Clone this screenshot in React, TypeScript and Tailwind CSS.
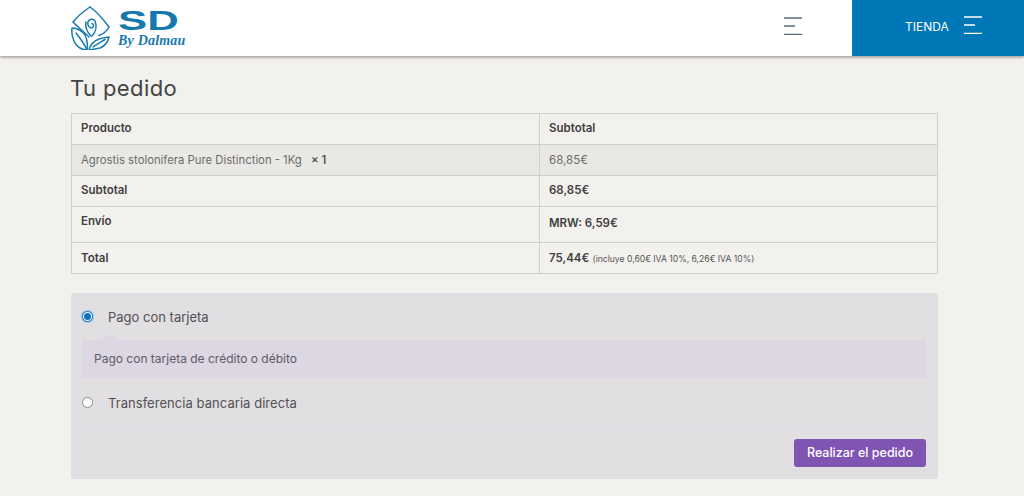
import React from 'react';

const Burger: React.FC<{ color: string; className?: string }> = ({ color, className }) => (
  <svg className={className} width="18" height="18" viewBox="0 0 18 18" fill="none" stroke={color} strokeWidth="1.5">
    <path d="M0 1H18" />
    <path d="M0 9H11" />
    <path d="M0 17.5H18" />
  </svg>
);

const Logo: React.FC = () => (
  <div className="flex items-start gap-[8px]">
    <svg width="39" height="44" viewBox="0 0 39 44" fill="none" stroke="#1679ad" strokeWidth="1.5" strokeLinejoin="round" strokeLinecap="round">
      <path d="M19 1C25 5 32 13 38 21C36 25 32 28 28 29.5" />
      <path d="M19 1C13 5 7 10 2 16C7 21 13 26 18 31" />
      <path d="M21 30C25 26 26 20 24 15C22 12 18 13 17 16C16 19 18 22 21 22C23 21 23 18 21 17.5" />
      <path d="M20 30C16 26 14 21 15 16" />
      <path d="M1 22C6 22 11 25 14 29C16 33 17 38 16 44C10 44 5 40 3 35C1 31 0.5 26 1 22Z" />
      <path d="M5 27C9 32 13 37 16 44" />
      <path d="M18 44C19 39 23 35 28 33C31 32 35 31.5 38 31C37 36 34 40 29 42C25 43 21 43.5 18 44Z" />
      <path d="M22 41C26 38 30 36 34 33.5" />
    </svg>
    <div className="mt-[5px] flex flex-col items-start">
      <span className="h-[20px] origin-left scale-x-[1.56] font-['Liberation_Sans',sans-serif] text-[28px] leading-[20px] font-bold text-[#1679ad]">SD</span>
      <span className="mt-[3px] font-['Liberation_Serif',serif] text-[14px] leading-[14px] font-bold tracking-[0.2px] text-[#1679ad] italic">By Dalmau</span>
    </div>
  </div>
);

const cell = 'border border-[#d0cfcb] px-[9px] text-left';

export default function App() {
  return (
    <div className="h-[496px] overflow-hidden bg-[#f2f1ee] font-['Inter',sans-serif] text-[#3f3f3f]">
      <header className="flex h-[56px] bg-white shadow-[0_2px_2px_rgba(120,110,100,0.5)]">
        <div className="flex flex-1 items-center justify-between pr-[50px] pl-[71px]">
          <Logo />
          <Burger color="#5b6b78" className="mt-[-4px]" />
        </div>
        <div className="flex w-[172px] items-center gap-[15px] bg-[#0077b6] pl-[53px] text-white">
          <span className="mt-[-2px] text-[12px]">TIENDA</span>
          <Burger color="#ffffff" className="mt-[-6px]" />
        </div>
      </header>

      <main className="mx-[71px] w-[867px]">
        <h2 className="mt-[17px] ml-[-1px] h-[40px] text-[22px] leading-[30px] tracking-[0.4px] text-[#444444]">Tu pedido</h2>

        <table className="w-full table-fixed border-collapse text-[11.5px]">
          <thead>
            <tr className="h-[31px]">
              <th className={`${cell} w-[468px] align-middle font-semibold`}>Producto</th>
              <th className={`${cell} align-middle font-semibold`}>Subtotal</th>
            </tr>
          </thead>
          <tbody>
            <tr className="h-[31px] bg-[#e9e8e5] text-[#6b6b6b]">
              <td className={`${cell} align-middle text-[11.3px]`}>
                Agrostis stolonifera Pure Distinction - 1Kg <strong className="ml-[6px] font-semibold text-[#555555]">× 1</strong>
              </td>
              <td className={`${cell} pt-[1px] align-middle`}>68,85€</td>
            </tr>
            <tr className="h-[31px]">
              <th className={`${cell} align-middle font-semibold`}>Subtotal</th>
              <td className={`${cell} align-middle font-semibold`}>68,85€</td>
            </tr>
            <tr className="h-[36px]">
              <th className={`${cell} pb-[5px] align-middle font-semibold`}>Envío</th>
              <td className={`${cell} pb-[2px] align-middle font-semibold`}>MRW: 6,59€</td>
            </tr>
            <tr className="h-[31px]">
              <th className={`${cell} pt-[1px] align-middle font-semibold`}>Total</th>
              <td className={`${cell} pt-[1px] align-middle`}>
                <strong className="font-semibold">75,44€</strong>{' '}
                <small className="text-[8.6px] text-[#555555]">(incluye 0,60€ IVA 10%, 6,26€ IVA 10%)</small>
              </td>
            </tr>
          </tbody>
        </table>

        <section className="mt-[19px] h-[186px] rounded-[3px] bg-[#e1dfe2] text-[#515151]">
          <label className="flex h-[47px] items-center pt-[2px] pl-[11px]">
            <span className="mt-[-2px] flex h-[11px] w-[11px] items-center justify-center rounded-full border border-[#1679c9] bg-white shadow-[0_0_2px_#1679c9]">
              <span className="h-[7px] w-[7px] rounded-full bg-[#0f6fc0]" />
            </span>
            <span className="ml-[15px] text-[13px]">Pago con tarjeta</span>
          </label>
          <div className="relative mr-[12px] ml-[11px] flex h-[38px] items-center bg-[#dcd7e3] pl-[12px] text-[12px] text-[#5f5b66]">
            <span className="absolute top-[-6px] left-[20px] h-0 w-0 border-x-[8px] border-b-[6px] border-x-transparent border-b-[#dcd7e3]" />
            Pago con tarjeta de crédito o débito
          </div>
          <label className="flex h-[48px] items-center border-b border-[#dddbdf] pt-[4px] pl-[11px]">
            <span className="mt-[-2px] h-[11px] w-[11px] rounded-full border border-[#8a8a8a] bg-white" />
            <span className="ml-[15px] text-[13px] tracking-[0.05px]">Transferencia bancaria directa</span>
          </label>
          <div className="flex justify-end pt-[13px] pr-[12px]">
            <button className="h-[28px] w-[132px] rounded-[3px] bg-[#7f54b3] text-[12.5px] font-medium text-white">Realizar el pedido</button>
          </div>
        </section>
      </main>
    </div>
  );
}
